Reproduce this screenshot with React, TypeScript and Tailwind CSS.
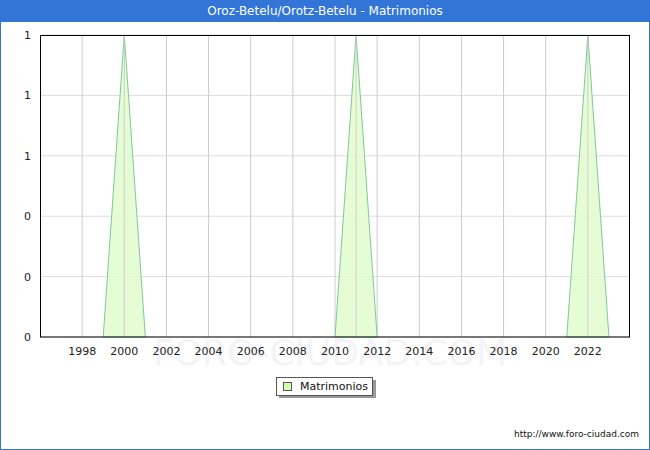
export default function App() {
  const x = (yr: number) => 40 + ((yr - 1996) * 590) / 28;
  const ys = [35, 95.4, 155.8, 216.2, 276.6, 337];
  const labels = ["1", "1", "1", "0", "0", "0"];
  const years = [];
  for (let y = 1998; y <= 2022; y += 2) years.push(y);
  const peaks = [2000, 2011, 2022];
  return (
    <div className="w-[650px] h-[450px] bg-white flex flex-col border border-t-0 border-[#3375d6]" style={{ fontFamily: '"DejaVu Sans", sans-serif' }}>
      <div className="h-[22px] bg-[#3375d6] text-white text-[12px] flex items-center justify-center shrink-0 -mx-px">Oroz-Betelu/Orotz-Betelu - Matrimonios</div>
      <div className="relative flex-1">
        <svg width="648" height="427" viewBox="1 22 648 427" className="absolute left-0 top-0">
          <text x="330" y="365" textAnchor="middle" fontSize="36" fill="#f3f3f8" fontFamily="DejaVu Sans">FORO-CIUDAD.COM</text>
          {ys.map((y, i) => (
            <line key={i} x1="40" x2="630" y1={y} y2={y} stroke="#dddddd" />
          ))}
          {years.map((yr) => (
            <line key={yr} x1={x(yr)} x2={x(yr)} y1="35" y2="337" stroke="#cccccc" />
          ))}
          {peaks.map((p) => (
            <polygon key={p} points={`${x(p - 1)},337 ${x(p)},35 ${x(p + 1)},337`} fill="#e2fccc" fillOpacity="0.85" stroke="#7fc99a" />
          ))}
          {peaks.map((p) => (
            <line key={"l" + p} x1={x(p)} x2={x(p)} y1="35" y2="337" stroke="#cccccc" strokeOpacity="0.8" />
          ))}
          <rect x="40.5" y="35.5" width="589" height="301.5" fill="none" stroke="#000" />
          {ys.map((y, i) => (
            <text key={"t" + i} x="31" y={y + 4} textAnchor="end" fontSize="11" fill="#222">{labels[i]}</text>
          ))}
          {years.map((yr) => (
            <text key={"y" + yr} x={x(yr)} y="355" textAnchor="middle" fontSize="11" fill="#222">{yr}</text>
          ))}
          <rect x="279" y="380" width="97" height="18" fill="#999" />
          <rect x="276.5" y="377.5" width="96" height="18" fill="#fff" stroke="#555" />
          <rect x="283.5" y="382.5" width="8" height="8" fill="#d6fcb0" stroke="#555" />
          <text x="300" y="390" fontSize="11" fill="#111">Matrimonios</text>
          <text x="639" y="437" textAnchor="end" fontSize="9" fill="#111">http://www.foro-ciudad.com</text>
        </svg>
      </div>
    </div>
  );
}
